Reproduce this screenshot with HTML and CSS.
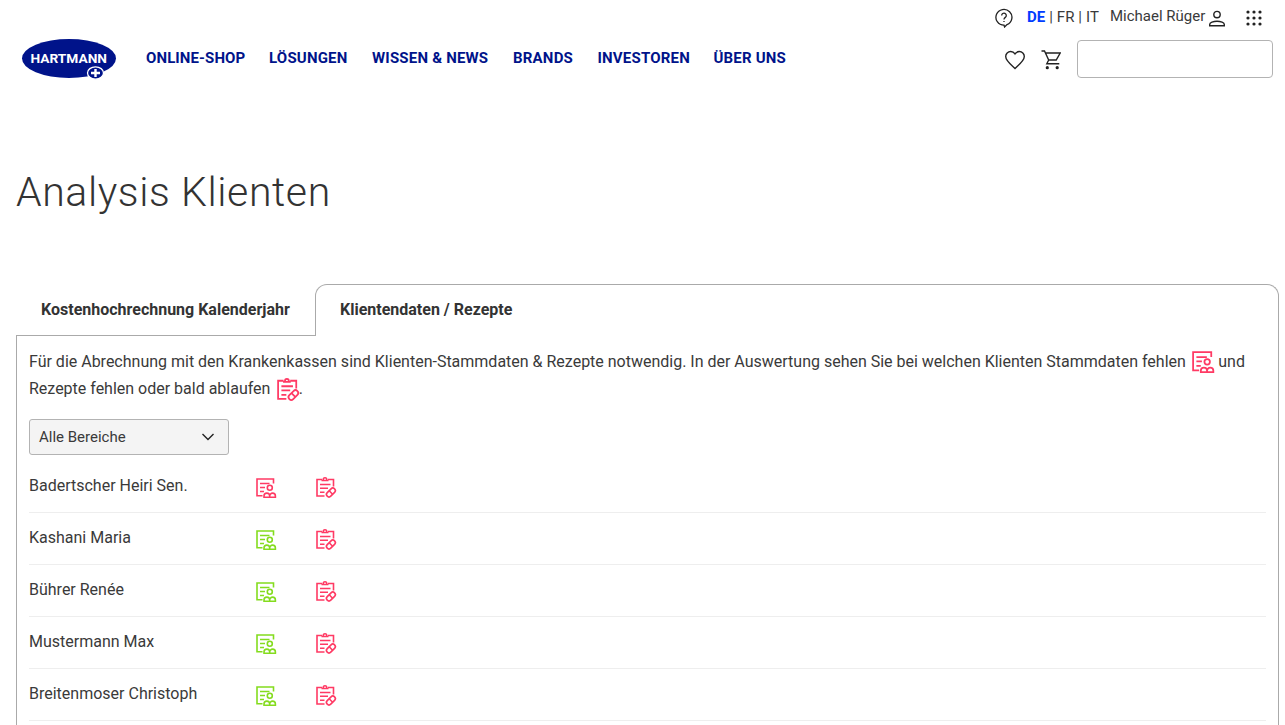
FILE: index.html
```html
<!DOCTYPE html>
<html lang="de">
  <head>
    <meta charset="UTF-8" />
    <meta name="viewport" content="width=device-width, initial-scale=1.0" />
    <title>Analysis Klienten</title>
    <link rel="stylesheet" href="styles.css">
  </head>
  <body>
    <svg class="sprite">
      <symbol id="stammdaten" viewBox="0 0 20 20">
        <path d="M17.5 5.5V1H1v16.7h5.5M4 5.5h9.500M4 9.5h5M4 13.5h4" />
        <circle cx="13.8" cy="9.8" r="2.5" />
        <path d="M8 19.3v-1.3a2.85 2.85 0 0 1 5.7 0v1.3zM13.7 19.3v-1.3a2.85 2.85 0 0 1 5.7 0v1.3z" />
      </symbol>
      <symbol id="rezept" viewBox="0 0 20 20">
        <path d="M17.5 9.5V2.5H12M6 2.5H1V19h7.5M5.500 3.500h7M7.200 3a1.800 2.200 0 0 1 3.600 0M4 7.5h10.5M4 11.3h8M4 15.3h4.5" />
        <rect x="9.7" y="13" width="10.4" height="5" rx="2.5" transform="rotate(-45 14.9 15.5)" />
        <path d="M13.2 13.8l3.4 3.4" />
      </symbol>
    </svg>

    <header>
      <a class="logo">
        <svg width="96" height="42" viewBox="0 0 96 42">
          <ellipse cx="48" cy="20.5" rx="47" ry="19.4" fill="#00138a" />
          <text x="9.5" y="24.5" textLength="76.5" lengthAdjust="spacingAndGlyphs">HARTMANN</text>
          <ellipse cx="74.5" cy="35" rx="8" ry="6.2" fill="#00138a" stroke="#fff" stroke-width="1.3" />
          <path d="M74.5 31v8M70 35h9" stroke="#fff" stroke-width="2.4" />
        </svg>
      </a>
      <nav>
        <a>ONLINE-SHOP</a>
        <a>LÖSUNGEN</a>
        <a>WISSEN &amp; NEWS</a>
        <a>BRANDS</a>
        <a>INVESTOREN</a>
        <a>ÜBER UNS</a>
      </nav>
      <div class="tools">
        <div class="meta">
          <svg class="help" width="20" height="20" viewBox="0 0 20 20">
            <path d="M10 17.2a8 7.9 0 1 1 3-.6L10.6 19z" />
            <path d="M7.7 7.5a2.3 2.3 0 1 1 3.8 1.7C10.5 10 10 10.3 10 11.5M10 12.9v1.2" />
          </svg>
          <span class="lang"><b>DE</b> | FR | IT</span>
          <span class="user">Michael Rüger</span>
          <svg class="person" width="18" height="18" viewBox="0 0 18 18">
            <circle cx="9" cy="4.6" r="3.2" />
            <path d="M1.7 15.8v-1.3c0-1.8 3.6-3.2 7.3-3.2s7.3 1.4 7.3 3.2v1.3z" />
          </svg>
          <svg class="dots" width="18" height="18" viewBox="0 0 18 18">
            <circle cx="3" cy="3" r="1.6" /><circle cx="9" cy="3" r="1.6" /><circle cx="15" cy="3" r="1.6" />
            <circle cx="3" cy="9" r="1.6" /><circle cx="9" cy="9" r="1.6" /><circle cx="15" cy="9" r="1.6" />
            <circle cx="3" cy="15" r="1.6" /><circle cx="9" cy="15" r="1.6" /><circle cx="15" cy="15" r="1.6" />
          </svg>
        </div>
        <div class="search">
          <svg class="heart" width="22" height="20" viewBox="0 0 22 20">
            <path d="M11 18.5L9.4 17C4 12.2 1.7 9.8 1.7 6.5A5 5 0 0 1 6.7 1.5C8.5 1.5 10 2.4 11 3.9C12 2.4 13.5 1.5 15.3 1.5A5 5 0 0 1 20.3 6.5C20.3 9.8 18 12.2 12.6 17z" />
          </svg>
          <svg class="cart" width="20" height="20" viewBox="0 0 20 20">
            <path d="M.5 1h3l4.2 9h7.5l4-7H4.5M7.7 10l-1.9 3.7h12.5" />
            <circle cx="6.3" cy="17.7" r="1.6" fill="#222" stroke="none" />
            <circle cx="16.2" cy="17.7" r="1.6" fill="#222" stroke="none" />
          </svg>
          <input type="text" />
        </div>
      </div>
    </header>

    <main>
      <h1>Analysis Klienten</h1>

      <div class="tabs">
        <div class="tab">Kostenhochrechnung Kalenderjahr</div>
        <div class="tab active">Klientendaten / Rezepte</div>
      </div>

      <div class="panel">
        <p>
          Für die Abrechnung mit den Krankenkassen sind Klienten-Stammdaten &amp; Rezepte notwendig. In der Auswertung sehen Sie bei welchen Klienten Stammdaten fehlen
          <svg class="icon red"><use href="#stammdaten" /></svg> und<br>
          Rezepte fehlen oder bald ablaufen
          <svg class="icon red"><use href="#rezept" /></svg>.
        </p>

        <div class="select">
          <span>Alle Bereiche</span>
          <svg width="14" height="8" viewBox="0 0 14 8"><path d="M1.5 1L7 6.5L12.5 1" /></svg>
        </div>

        <div class="row">
          <span>Badertscher Heiri Sen.</span>
          <svg class="icon red"><use href="#stammdaten" /></svg>
          <svg class="icon red"><use href="#rezept" /></svg>
        </div>
        <div class="row">
          <span>Kashani Maria</span>
          <svg class="icon green"><use href="#stammdaten" /></svg>
          <svg class="icon red"><use href="#rezept" /></svg>
        </div>
        <div class="row">
          <span>Bührer Renée</span>
          <svg class="icon green"><use href="#stammdaten" /></svg>
          <svg class="icon red"><use href="#rezept" /></svg>
        </div>
        <div class="row">
          <span>Mustermann Max</span>
          <svg class="icon green"><use href="#stammdaten" /></svg>
          <svg class="icon red"><use href="#rezept" /></svg>
        </div>
        <div class="row">
          <span>Breitenmoser Christoph</span>
          <svg class="icon green"><use href="#stammdaten" /></svg>
          <svg class="icon red"><use href="#rezept" /></svg>
        </div>
      </div>
    </main>
  </body>
</html>
```

FILE: styles.css
```css
* {
  box-sizing: border-box;
}
body {
  margin: 0;
  background: #fff;
  color: #3a3a3a;
  font-family: Roboto, sans-serif;
  font-size: 16px;
}
svg {
  flex: none;
  fill: none;
  stroke: #222;
  stroke-width: 1.4;
}
.sprite {
  display: none;
}
symbol {
  overflow: visible;
}
header {
  display: flex;
  height: 90px;
  padding: 0 12px 0 21px;
}
.logo {
  width: 125px;
  padding-top: 38px;
}
.logo svg {
  display: block;
  stroke: none;
}
.logo text {
  fill: #fff;
  font-size: 13px;
  font-weight: 700;
}
nav {
  display: grid;
  grid-template-columns: 123px 103px 141px 84.5px 116px auto;
  padding-top: 48px;
  color: #00138a;
  font-size: 15px;
  font-weight: 700;
  line-height: 20px;
  letter-spacing: 0.2px;
  white-space: nowrap;
}
nav a:first-child {
  letter-spacing: 0.1px;
}
.tools {
  width: 279px;
  margin-left: auto;
}
.meta {
  display: flex;
  height: 40px;
  padding-top: 7px;
  font-size: 15px;
  line-height: 19px;
  white-space: nowrap;
}
.help {
  margin: 1px 13px 0 0;
  stroke-width: 1.3;
}
.lang {
  width: 83px;
  padding-top: 1px;
  letter-spacing: 0.1px;
}
.lang b {
  color: #003cff;
}
.user {
  width: 98px;
}
.person {
  margin-top: 3px;
}
.dots {
  margin: 2px 0 0 19px;
  fill: #222;
  stroke: none;
}
.search {
  display: flex;
}
.heart {
  margin: 10px 0 0 10px;
}
.cart {
  margin: 10px 0 0 15px;
}
.search input {
  width: 196px;
  height: 38px;
  margin-left: auto;
  border: 1px solid #b3b3b3;
  border-radius: 4px;
}
main {
  padding: 0 6px 0 16px;
}
h1 {
  margin: 0;
  padding-top: 78px;
  height: 194px;
  color: #333;
  font-size: 41px;
  font-weight: 300;
  line-height: 48px;
  letter-spacing: 0.6px;
}
.tabs {
  display: flex;
  height: 52px;
  color: #333;
  font-weight: 700;
  line-height: 50px;
}
.tab {
  width: 299px;
  padding: 1px 0 0 25px;
  border-bottom: 1px solid #aaa;
}
.tab.active {
  flex: 1;
  padding: 0 0 0 24px;
  border: 1px solid #aaa;
  border-bottom: none;
  border-radius: 12px 12px 0 0;
}
.panel {
  height: 389px;
  padding: 12px 12px 0;
  border: 1px solid #aaa;
  border-top: none;
  border-bottom: none;
}
p {
  margin: 0;
  line-height: 27px;
  letter-spacing: -0.005px;
  white-space: nowrap;
}
.icon {
  width: 20px;
  height: 20px;
  overflow: visible;
  stroke-width: 1.6;
}
p .icon {
  width: 22px;
  height: 22px;
  margin-left: 2.5px;
  vertical-align: -6px;
}
.red {
  stroke: #ff3a64;
}
.green {
  stroke: #84dc1e;
}
.select {
  display: flex;
  align-items: center;
  justify-content: space-between;
  width: 200px;
  height: 36px;
  margin: 17px 0 6px;
  padding: 0 13px 0 9px;
  border: 1px solid #b3b3b3;
  border-radius: 3px;
  background: #f4f4f4;
  font-size: 15px;
}
.row {
  display: grid;
  grid-template-columns: 227px 60px 20px;
  height: 52px;
  border-bottom: 1px solid #eee;
  line-height: 49px;
}
.row .icon {
  margin-top: 17px;
}
.row .icon:last-child {
  margin-top: 16px;
}
```
